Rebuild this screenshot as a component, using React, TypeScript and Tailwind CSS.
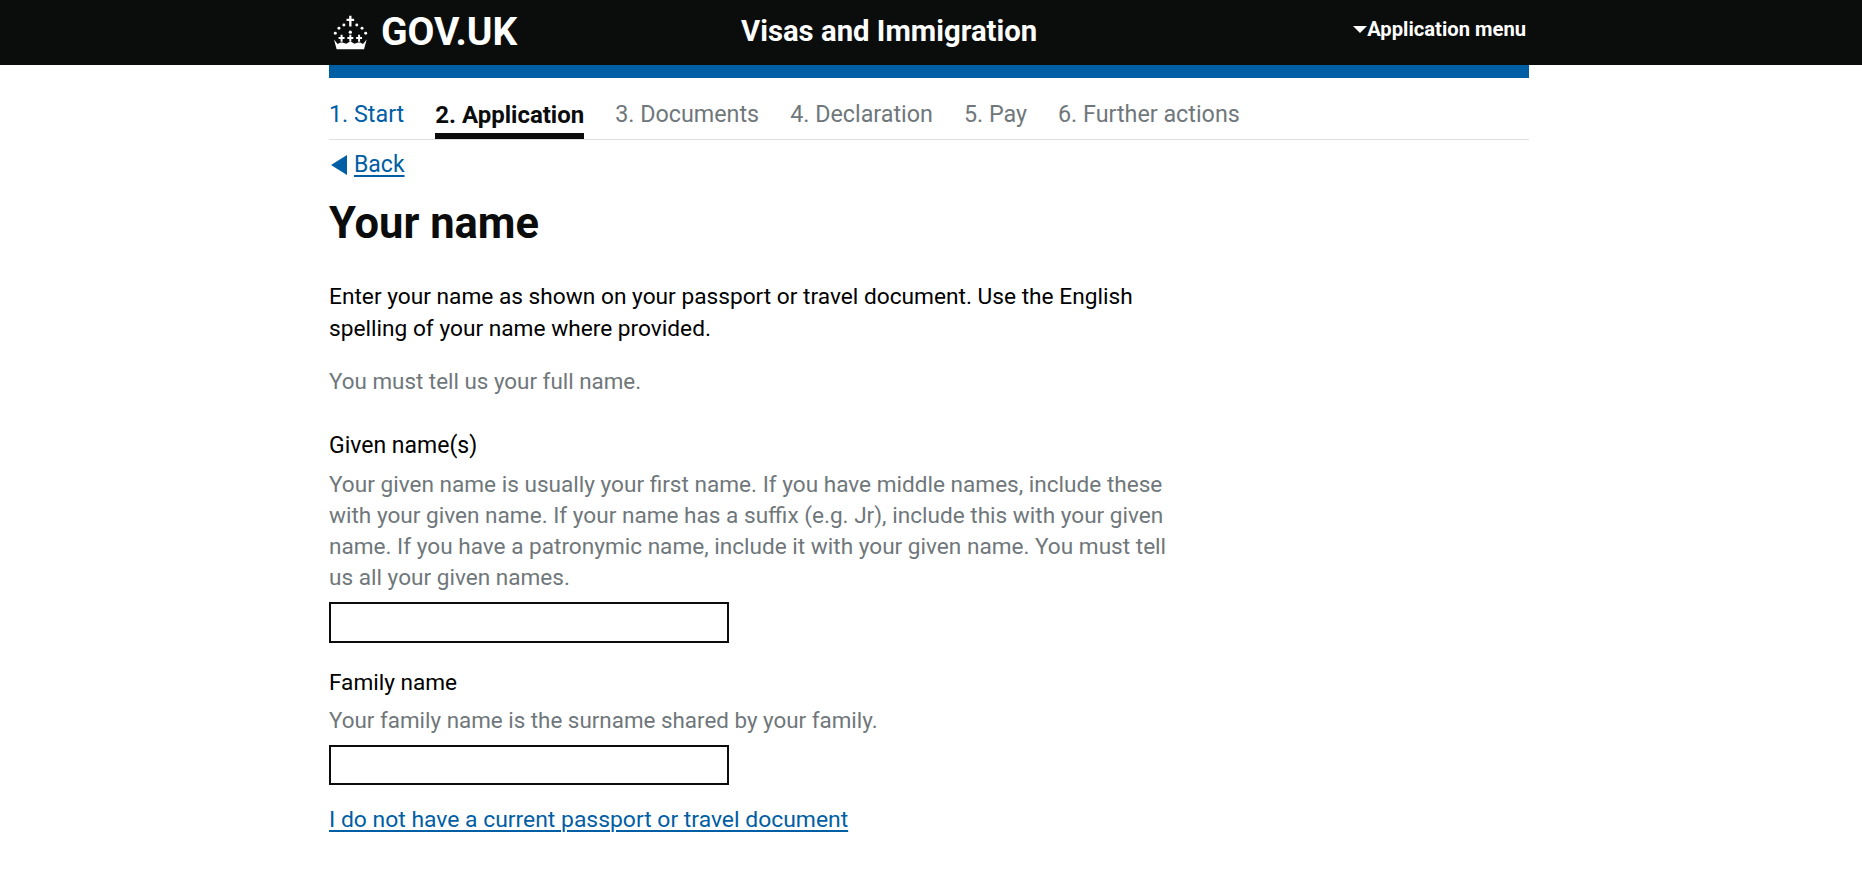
const steps = [
  { label: "1. Start", className: "text-[#005ea5] border-transparent text-[23.300px]" },
  { label: "2. Application", className: "text-[#0b0c0c] font-bold border-[#0b0c0c] text-[24px]" },
  { label: "3. Documents", className: "text-[#6f777b] border-transparent text-[23.300px]" },
  { label: "4. Declaration", className: "text-[#6f777b] border-transparent text-[23.300px]" },
  { label: "5. Pay", className: "text-[#6f777b] border-transparent text-[23.300px]" },
  { label: "6. Further actions", className: "text-[#6f777b] border-transparent text-[23.300px]" },
];

const Crown = () => (
  <svg width="35" height="35" viewBox="40 22 104 106" fill="#fff" aria-hidden="true">
    {/* top cross */}
    <path d="M88 24h7v9h8v7h-8v17h-7V40h-8v-7h8z" />
    {/* jewels */}
    <circle cx="72" cy="52" r="4.500" />
    <circle cx="111" cy="52" r="4.500" />
    <circle cx="57" cy="62" r="4.500" />
    <circle cx="127" cy="62" r="4.500" />
    <circle cx="46" cy="77" r="4.500" />
    <circle cx="138" cy="77" r="4.500" />
    <circle cx="91.500" cy="74" r="5" />
    {/* small crosses */}
    <path d="M62 82h6v7h6v6h-6v8h-6v-8h-6v-6h6z" />
    <path d="M88.500 82h6v7h6v6h-6v8h-6v-8h-6v-6h6z" />
    <path d="M115 82h6v7h6v6h-6v8h-6v-8h-6v-6h6z" />
    {/* band */}
    <path d="M42 96l11 14 9-5h6l11 4 9-5h7l9 5 11-4h6l9 5 11-14-8 30H50z" />
  </svg>
);

export default function App() {
  return (
    <div className="min-h-[877px] bg-white font-['Roboto',sans-serif] text-[23px] text-[#0b0c0c]">
      <header className="h-[65px] bg-[#0b0c0c] text-white">
        <div className="ml-[329px] flex h-full w-[1200px] items-center">
          <div className="flex w-[412px] items-center">
            <span className="ml-[4px] mr-[1px] flex w-[47px]">
              <Crown />
            </span>
            <span className="text-[39px] font-bold leading-none">GOV.UK</span>
          </div>
          <div className="mb-[2px] text-[29.300px] font-bold leading-none">Visas and Immigration</div>
          <div className="mb-[6px] ml-auto mr-[3px] flex items-center text-[20.200px] font-bold">
            <span className="h-0 w-0 border-x-[7px] border-t-[7px] border-x-transparent border-t-white" />
            Application menu
          </div>
        </div>
      </header>

      <main className="ml-[329px] w-[1200px]">
        <div className="h-[13px] bg-[#005ea5]" />

        <nav className="flex h-[62px] gap-[31px] border-b border-[#dee0e2]">
          {steps.map((step) => (
            <div
              key={step.label}
              className={`flex h-[61px] items-center border-b-[6px] pt-[18px] ${step.className}`}
            >
              {step.label}
            </div>
          ))}
        </nav>

        <a href="#" className="mt-[12px] flex h-[26px] items-center text-[#005ea5]">
          <span className="ml-[2px] mr-[7px] h-0 w-0 border-y-[10px] border-r-[16px] border-y-transparent border-r-[#005ea5]" />
          <span className="underline decoration-2 underline-offset-[3px]">Back</span>
        </a>

        <h1 className="mt-[23px] text-[43.500px] font-bold leading-[46px]">Your name</h1>

        <p className="mt-[34px] w-[820px] text-[22.700px] leading-[32px] text-black">
          Enter your name as shown on your passport or travel document. Use the English spelling of your name where
          provided.
        </p>
        <p className="mt-[20px] text-[22.400px] leading-[32px] text-[#6f777b]">You must tell us your full name.</p>

        <form>
          <label className="mt-[33px] block leading-[32px] text-black">Given name(s)</label>
          <p className="mt-[7px] w-[870px] text-[22.600px] leading-[31px] text-[#6f777b]">
            Your given name is usually your first name. If you have middle names, include these
            <br />
            with your given name. If your name has a suffix (e.g. Jr), include this with your given
            <br />
            name. If you have a patronymic name, include it with your given name. You must tell
            <br />
            us all your given names.
          </p>
          <input type="text" className="mt-[9px] block h-[41px] w-[400px] border-2 border-[#0b0c0c]" />

          <label className="mt-[24px] block text-[22.600px] leading-[32px] text-black">Family name</label>
          <p className="mt-[6px] text-[22.400px] leading-[31px] text-[#6f777b]">
            Your family name is the surname shared by your family.
          </p>
          <input type="text" className="mt-[9px] block h-[40px] w-[400px] border-2 border-[#0b0c0c]" />
        </form>

        <a
          href="#"
          className="mt-[19px] block text-[22.900px] leading-[32px] text-[#005ea5] underline decoration-2 underline-offset-[3px]"
        >
          I do not have a current passport or travel document
        </a>
      </main>
    </div>
  );
}
